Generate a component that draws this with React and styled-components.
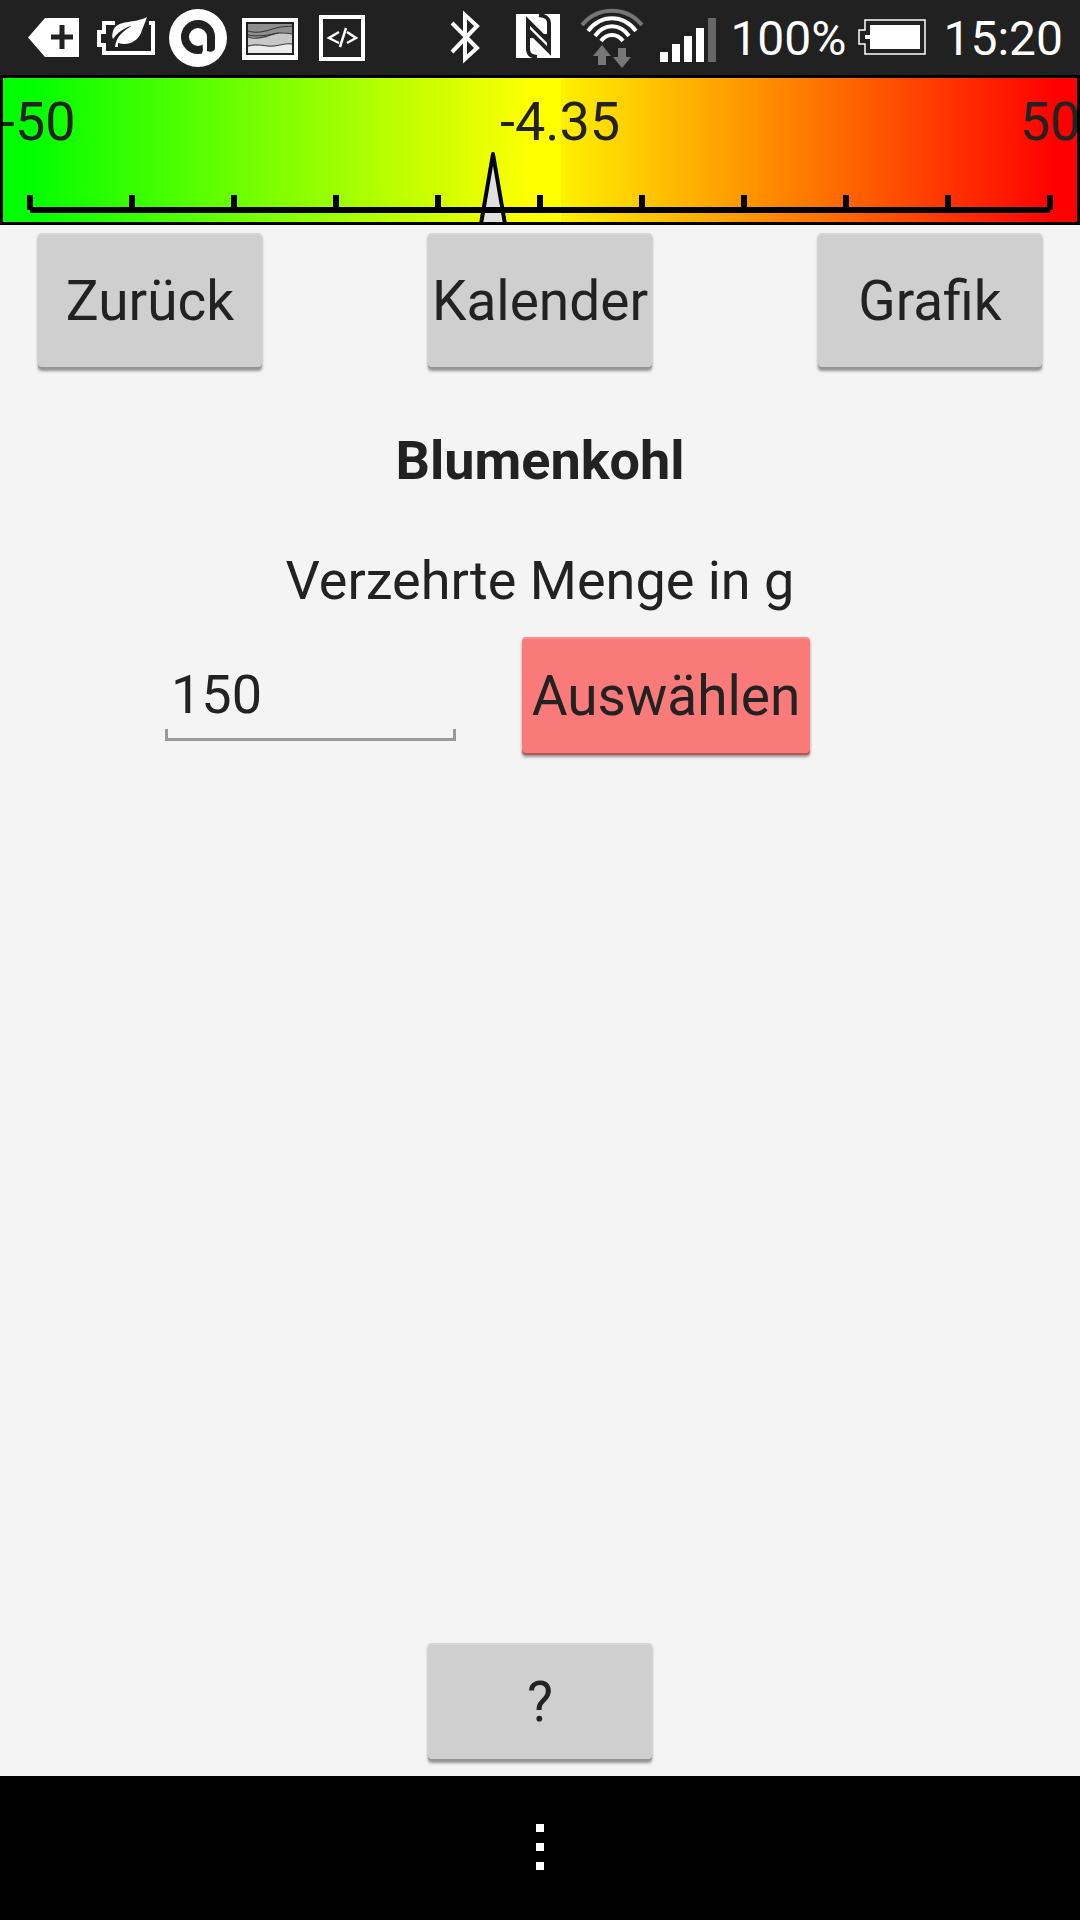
import React, { useState } from 'react';
import styled, { createGlobalStyle } from 'styled-components';

const GlobalStyle = createGlobalStyle`
  *, *::before, *::after { box-sizing: border-box; }
  body {
    margin: 0;
    background: #f4f4f4;
    color: #222;
    font-family: Roboto, "Liberation Sans", sans-serif;
  }
`;

const Screen = styled.div`
  display: flex;
  flex-direction: column;
  min-height: 100vh;
`;

const StatusBar = styled.header`
  display: flex;
  justify-content: space-between;
  align-items: center;
  height: 75px;
  padding: 0 17px 0 18px;
  background: #212121;
  color: #fff;
`;

const StatusGroup = styled.div`
  display: flex;
  align-items: center;
`;

const StatusText = styled.span`
  padding-top: 2px;
  font-size: 48px;
  line-height: 56px;
  white-space: nowrap;
`;

const Glyph = styled.svg`
  display: block;
  flex: none;
  height: 75px;
`;

const Gauge = styled.section`
  height: 150px;
  overflow: hidden;
  border: 3px solid #000;
  background: linear-gradient(
    to right,
    #0f0 2%,
    #ff0 49%,
    #ff0 52%,
    #fff000 52%,
    #f00 98%
  );
`;

const GaugeLabels = styled.div`
  display: grid;
  grid-template-columns: 500fr 520fr 60px;
  height: 72px;
  margin: 0 -3px;
  padding-top: 12px;
  font-size: 54px;
  line-height: 64px;
  white-space: nowrap;
`;

const GaugeScale = styled.svg`
  display: block;
  width: 100%;
  height: 72px;
`;

const Toolbar = styled.nav`
  display: flex;
  justify-content: space-between;
  padding: 8px 38px 0;
`;

const Button = styled.button`
  width: ${(p) => p.$width || 224}px;
  height: ${(p) => p.$height || 118}px;
  padding: 0;
  border: 0;
  border-radius: 4px;
  background: ${(p) => (p.$accent ? '#fa7a79' : '#cfcfcf')};
  box-shadow:
    inset 0 -2px 0 rgba(0, 0, 0, 0.28),
    inset 0 2px 0 rgba(255, 255, 255, 0.15),
    0 2px 3px rgba(0, 0, 0, 0.4);
  color: #222;
  font: inherit;
  font-size: 55px;
  line-height: 64px;
  white-space: nowrap;
  cursor: pointer;
`;

const Main = styled.main`
  display: flex;
  flex: 1;
  flex-direction: column;
  align-items: center;
`;

const Title = styled.h1`
  margin: 60px 0 56px;
  font-size: 54px;
  font-weight: 700;
  line-height: 64px;
`;

const AmountForm = styled.form`
  display: flex;
  flex-direction: column;
  align-items: center;
  gap: 24px;
  width: 100%;
`;

const AmountLabel = styled.label`
  font-size: 54px;
  line-height: 64px;
`;

const AmountRow = styled.div`
  display: flex;
  align-self: stretch;
  gap: 66px;
  padding-left: 165px;
`;

const AmountInput = styled.input`
  width: 291px;
  height: 104px;
  padding: 10px 6px 0;
  border: 0;
  border-radius: 0;
  outline: 0;
  background:
    linear-gradient(#999, #999) 0 100% / 100% 3px no-repeat,
    linear-gradient(#999, #999) 0 100% / 3px 12px no-repeat,
    linear-gradient(#999, #999) 100% 100% / 3px 12px no-repeat;
  color: #222;
  font: inherit;
  font-size: 54px;
  line-height: 64px;
`;

const Help = styled.footer`
  display: flex;
  justify-content: center;
  margin-top: auto;
  padding-bottom: 15px;
`;

const SystemBar = styled.div`
  display: flex;
  justify-content: center;
  height: 144px;
  background: #000;
`;

const MenuButton = styled.button`
  display: flex;
  flex-direction: column;
  align-items: center;
  justify-content: center;
  gap: 11px;
  width: 144px;
  padding: 0 0 2px;
  border: 0;
  background: none;
  cursor: pointer;
`;

const Dot = styled.span`
  width: 8px;
  height: 8px;
  background: #fff;
`;

function StatusIcon({ x, width, children }) {
  return (
    <Glyph width={width} viewBox={`${x} 0 ${width} 75`} fill="none" aria-hidden="true">
      {children}
    </Glyph>
  );
}

function NotificationIcons() {
  return (
    <StatusGroup>
      <StatusIcon x={18} width={72}>
        <path d="M28 37.500 45 18H79V57H45Z" fill="#fff" />
        <path d="M51 37H73M62 25V49" stroke="#212121" strokeWidth="5" />
      </StatusIcon>
      <StatusIcon x={90} width={72}>
        <path d="M115 23H104V32H99V45H104V53H153V23H149" stroke="#fff" strokeWidth="4" />
        <path
          d="M147 17C135 24 117 19 113 31C112 35 112 37 113 39C118 32 124 28 131 26C124 31 116 36 115 47H118V43C128 46 137 42 141 33C143 27 145 23 147 17Z"
          fill="#fff"
        />
      </StatusIcon>
      <StatusIcon x={162} width={72}>
        <circle cx="198" cy="38" r="29" fill="#fff" />
        <circle cx="198" cy="37" r="13" stroke="#212121" strokeWidth="8" />
        <path d="M202 38H207V56H201L203 50Z" fill="#fff" />
        <path d="M207 37H215V48C215 51 211 53 207 51Z" fill="#212121" />
      </StatusIcon>
      <StatusIcon x={234} width={72}>
        <path d="M242 18H298V60H242Z" fill="#fff" />
        <path d="M246 22H294V55H246Z" fill="#212121" />
        <path d="M248 24H292V53H248Z" fill="#c8c8c8" />
        <path d="M248 24H292V34C282 31 276 34 268 37C260 40 254 37 248 37Z" fill="#8e8e8e" />
        <path d="M248 47C258 44 266 47 274 46C282 45 286 43 292 44V53H248Z" fill="#ececec" />
        <path
          d="M248 31C258 34 266 31 276 28C282 26 288 27 292 26M248 35C258 37 270 35 278 33M248 37C256 40 264 37 270 35C278 32 286 33 292 34M248 46C258 43 266 47 274 46C282 45 286 43 292 44"
          stroke="#333"
        />
      </StatusIcon>
      <StatusIcon x={306} width={72}>
        <path d="M321 17H363V59H321Z" stroke="#fff" strokeWidth="4" />
        <path d="M339 32 329 38 339 43M346 28 340 47M347 32 356 38 347 43" stroke="#fff" strokeWidth="2.500" />
      </StatusIcon>
    </StatusGroup>
  );
}

function SystemStatus() {
  return (
    <StatusGroup>
      <StatusIcon x={428} width={74}>
        <path d="M452 23 477 48 465 59V15L477 26 452 52" stroke="#fff" strokeWidth="4" />
      </StatusIcon>
      <StatusIcon x={502} width={74}>
        <path d="M516 14H560V58H516Z" fill="#fff" />
        <path
          d="M537 57C530 56 528 54 528 49V21L545 38V34M539 15C546 16 549 18 549 23V51L532 34V38"
          stroke="#212121"
          strokeWidth="4"
        />
      </StatusIcon>
      <StatusIcon x={576} width={74}>
        <path d="M582 25C598 6 626 6 642 25" stroke="#777" strokeWidth="4" />
        <path
          d="M588 31C601 14 623 14 636 31M595 36C604 23 620 23 629 36M601 41C607 33 617 33 623 41"
          stroke="#fff"
          strokeWidth="4"
        />
        <path d="M602 45 611 56H606V65H598V56H593ZM618 48H626V57H631L622 68 613 57H618Z" fill="#777" />
      </StatusIcon>
      <StatusIcon x={650} width={80}>
        <path d="M660 52H668V62H660ZM672 44H680V62H672ZM684 36H692V62H684ZM696 28H704V62H696Z" fill="#fff" />
        <path d="M708 18H716V62H708Z" fill="#666" />
      </StatusIcon>
      <StatusText>100%</StatusText>
      <StatusIcon x={846} width={97}>
        <path d="M865 20H925V54H865V44H859V30H865Z" stroke="#fff" strokeWidth="1.500" />
        <path d="M870 25H920V49H870V39H865V35H870Z" fill="#fff" />
      </StatusIcon>
      <StatusText>15:20</StatusText>
    </StatusGroup>
  );
}

const TICKS = Array.from({ length: 11 }, (_, i) => 27 + i * 102);

function BalanceGauge() {
  return (
    <Gauge aria-label="Bilanz">
      <GaugeLabels>
        <span>-50</span>
        <span>-4.35</span>
        <span>50</span>
      </GaugeLabels>
      <GaugeScale viewBox="0 0 1074 72" preserveAspectRatio="none" aria-hidden="true">
        <path
          d="M490 4 478 74H502Z"
          fill="#e0e0e0"
          stroke="#000"
          strokeWidth="4"
          strokeLinejoin="round"
        />
        <path d="M27 60H1047" stroke="#000" strokeWidth="6" />
        {TICKS.map((x) => (
          <path key={x} d={`M${x} 45V60`} stroke="#000" strokeWidth="6" />
        ))}
      </GaugeScale>
    </Gauge>
  );
}

export default function App() {
  const [amount, setAmount] = useState('150');

  return (
    <Screen>
      <GlobalStyle />
      <StatusBar>
        <NotificationIcons />
        <SystemStatus />
      </StatusBar>
      <BalanceGauge />
      <Toolbar>
        <Button type="button" $height={136}>Zurück</Button>
        <Button type="button" $height={136}>Kalender</Button>
        <Button type="button" $height={136}>Grafik</Button>
      </Toolbar>
      <Main>
        <Title>Blumenkohl</Title>
        <AmountForm onSubmit={(e) => e.preventDefault()}>
          <AmountLabel htmlFor="amount">Verzehrte Menge in g</AmountLabel>
          <AmountRow>
            <AmountInput
              id="amount"
              inputMode="numeric"
              value={amount}
              onChange={(e) => setAmount(e.target.value)}
            />
            <Button type="submit" $width={288} $accent>Auswählen</Button>
          </AmountRow>
        </AmountForm>
        <Help>
          <Button type="button">?</Button>
        </Help>
      </Main>
      <SystemBar>
        <MenuButton type="button" aria-label="Menü">
          <Dot />
          <Dot />
          <Dot />
        </MenuButton>
      </SystemBar>
    </Screen>
  );
}
